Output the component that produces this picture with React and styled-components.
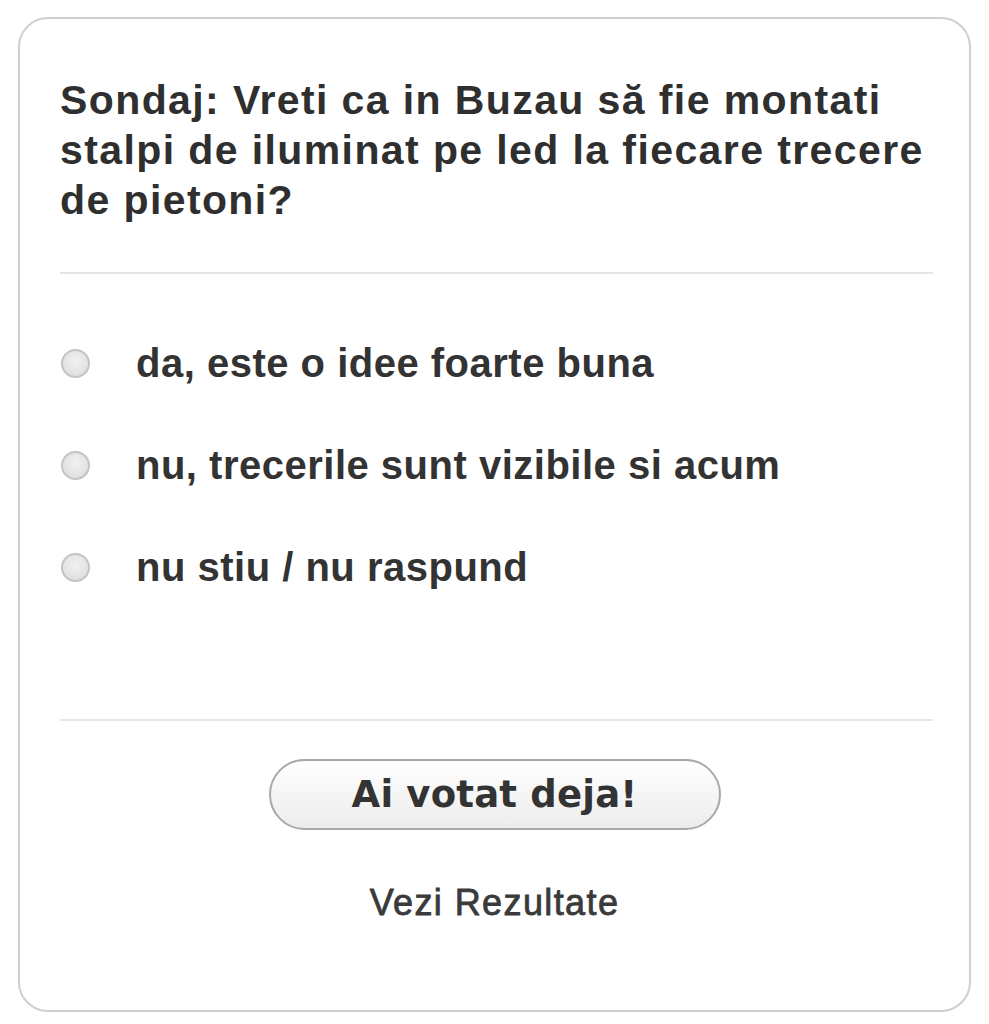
import React from "react";
import styled, { createGlobalStyle } from "styled-components";

const Global = createGlobalStyle`
  html, body { margin: 0; padding: 0; background: #fff; }
  body { font-family: "Liberation Sans", Arial, sans-serif; }
`;

const Card = styled.div`
  box-sizing: border-box;
  margin: 17px 0 0 18px;
  width: 953px;
  height: 995px;
  border: 2px solid #cfcfcf;
  border-radius: 30px;
  background: #fff;
  padding: 56px 36px 0 40px;
  display: flex;
  flex-direction: column;
`;

const Title = styled.h2`
  margin: 0;
  font-family: "Liberation Sans", Arial, sans-serif;
  font-weight: bold;
  font-size: 41px;
  line-height: 50px;
  letter-spacing: 1.4px;
  color: #2f2f2f;
`;

const Divider = styled.hr`
  margin: ${(p) => p.$top}px 0 0;
  border: 0;
  height: 2px;
  background: #e6e6e6;
`;

const Options = styled.div`
  margin-top: 38px;
  display: flex;
  flex-direction: column;
`;

const Option = styled.label`
  height: 102px;
  display: flex;
  align-items: center;
  gap: 46px;
  padding-left: 1px;
  font-family: "Liberation Sans", Arial, sans-serif;
  font-weight: bold;
  font-size: 40px;
  letter-spacing: 0.5px;
  color: #333;
`;

const Radio = styled.span`
  flex: none;
  box-sizing: border-box;
  width: 29px;
  height: 29px;
  border-radius: 50%;
  border: 2px solid #c4c4c4;
  background: radial-gradient(circle at 50% 40%, #f0f0f0 0%, #dcdcdc 100%);
`;

const Button = styled.button`
  align-self: center;
  margin: 38px 0 0 -4px;
  width: 452px;
  height: 71px;
  border-radius: 36px;
  border: 2px solid #a8a8a8;
  background: linear-gradient(#ffffff, #ececec);
  font-family: "DejaVu Sans", Verdana, sans-serif;
  font-weight: bold;
  font-size: 37px;
  letter-spacing: 0.2px;
  color: #333;
  padding: 0;
`;

const Results = styled.a`
  align-self: center;
  margin: 53px 0 0 -4px;
  line-height: 40px;
  font-family: "Liberation Sans", Arial, sans-serif;
  font-size: 36px;
  letter-spacing: 1.4px;
  color: #3a3a3a;
  text-decoration: none;
  -webkit-text-stroke: 0.8px #3a3a3a;
`;

const options = [
  "da, este o idee foarte buna",
  "nu, trecerile sunt vizibile si acum",
  "nu stiu / nu raspund",
];

export default function App() {
  return (
    <>
      <Global />
      <Card>
        <Title>
          Sondaj: Vreti ca in Buzau să fie montati stalpi de iluminat pe led la
          fiecare trecere de pietoni?
        </Title>
        <Divider $top={47} />
        <Options>
          {options.map((o) => (
            <Option key={o}>
              <Radio />
              {o}
            </Option>
          ))}
        </Options>
        <Divider $top={101} />
        <Button>Ai votat deja!</Button>
        <Results href="#">Vezi Rezultate</Results>
      </Card>
    </>
  );
}
